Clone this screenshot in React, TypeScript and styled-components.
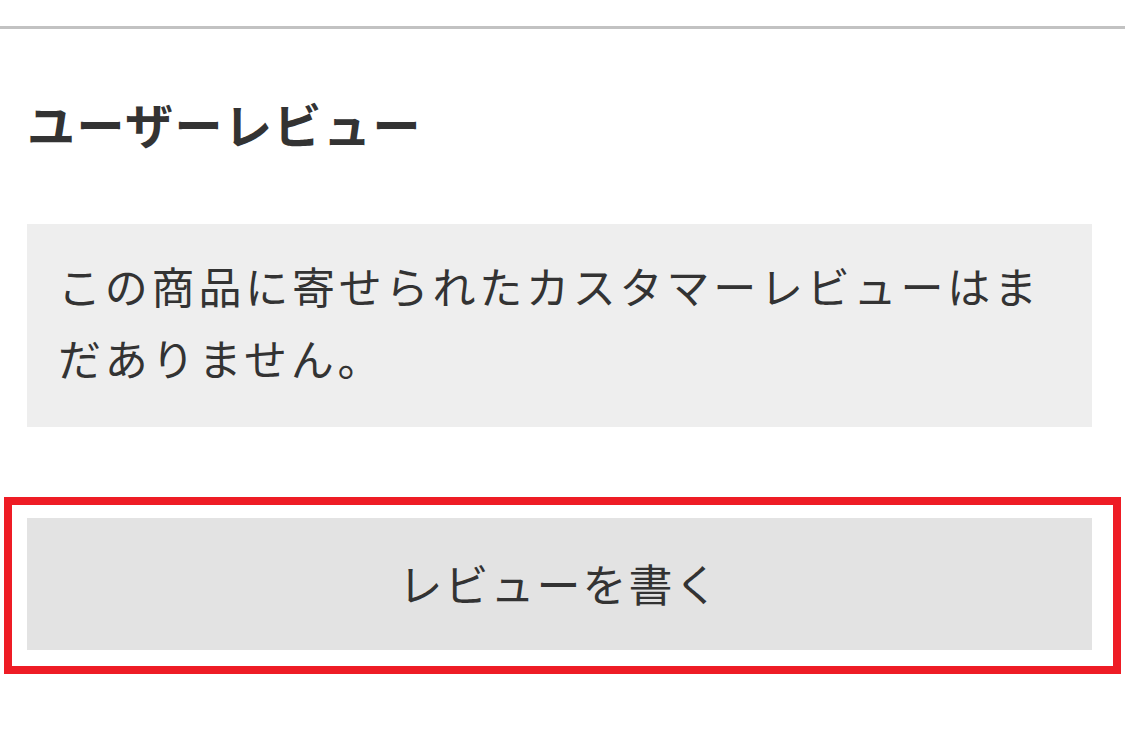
import React from "react";
import styled, { createGlobalStyle } from "styled-components";

const GlobalStyle = createGlobalStyle`
  html, body {
    margin: 0;
    padding: 0;
    background: #ffffff;
  }
  body {
    font-family: "Noto Sans CJK JP", "Noto Sans", sans-serif;
    color: #333333;
  }
`;

const Page = styled.div`
  width: 1125px;
  display: flex;
  flex-direction: column;
  padding-top: 26px;
`;

const Divider = styled.hr`
  margin: 0;
  border: none;
  height: 3px;
  background: #c2c2c2;
  width: 100%;
`;

const Section = styled.section`
  display: flex;
  flex-direction: column;
  padding: 0 33px 0 27px;
`;

const Heading = styled.h2`
  margin: 0;
  padding-top: 70px;
  font-size: 48px;
  font-weight: 700;
  line-height: 1;
  letter-spacing: 1.5px;
  color: #333333;
`;

const EmptyNotice = styled.p`
  margin: 77px 0 0;
  background: #eeeeee;
  padding: 25px 30px 0 31px;
  font-size: 43px;
  line-height: 72px;
  letter-spacing: 3.8px;
  color: #333333;
  height: 203px;
  box-sizing: border-box;
`;

const Highlight = styled.div`
  margin: 70px 4px 0 4px;
  width: 1117px;
  box-sizing: border-box;
  border: 8px solid #ee1c25;
  padding: 13px 21px 16px 15px;
  display: flex;
`;

const WriteButton = styled.button`
  flex: 1;
  height: 132px;
  border: none;
  background: #e3e3e3;
  font-family: "Noto Sans CJK JP", "Noto Sans", sans-serif;
  font-size: 44px;
  letter-spacing: 2px;
  color: #333333;
  display: flex;
  align-items: center;
  justify-content: center;
  cursor: pointer;
  padding: 0 0 2px;
`;

export default function App() {
  return (
    <>
      <GlobalStyle />
      <Page>
        <Divider />
        <Section>
          <Heading>ユーザーレビュー</Heading>
          <EmptyNotice>
            この商品に寄せられたカスタマーレビューはまだありません。
          </EmptyNotice>
        </Section>
        <Highlight>
          <WriteButton>レビューを書く</WriteButton>
        </Highlight>
      </Page>
    </>
  );
}
